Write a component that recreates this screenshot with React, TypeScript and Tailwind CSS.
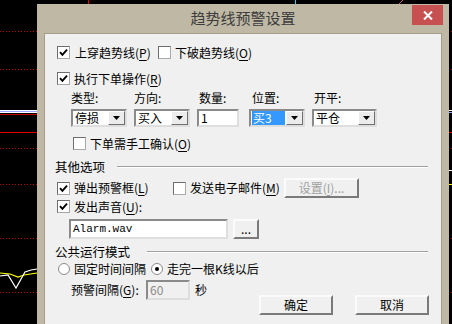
import React from "react";

const CJK = "font-['Noto_Sans_CJK_SC','Liberation_Sans',sans-serif]";

function Check({ checked }: { checked?: boolean }) {
  return (
    <span className="w-[13px] h-[13px] shrink-0 border border-t-[#6d6d6d] border-l-[#6d6d6d] border-r-[#a9a9a9] border-b-[#a9a9a9] bg-white flex items-center justify-center">
      {checked && (
        <svg width="9" height="9" viewBox="0 0 9 9">
          <path d="M1 4.2 L3.4 6.8 L8 1.6" stroke="#000" strokeWidth="1.9" fill="none" />
        </svg>
      )}
    </span>
  );
}

function Radio({ checked }: { checked?: boolean }) {
  return (
    <span className="w-[12px] h-[12px] shrink-0 rounded-full border border-[#8a8a8a] bg-white flex items-center justify-center">
      {checked && <span className="w-[4px] h-[4px] rounded-full bg-black" />}
    </span>
  );
}

function U({ c }: { c: string }) {
  return (
    <>
      (<span className="underline underline-offset-2">{c}</span>)
    </>
  );
}

function Arrow() {
  return (
    <span className="w-[17px] h-full shrink-0 bg-[#ececec] border border-t-white border-l-white border-r-[#6f6f6f] border-b-[#6f6f6f] flex items-center justify-center">
      <svg width="7" height="4" viewBox="0 0 7 4">
        <path d="M0 0 H7 L3.5 4 Z" fill="#000" />
      </svg>
    </span>
  );
}

function Select({ text, w, active }: { text: string; w: string; active?: boolean }) {
  return (
    <div className={`${w} h-[18px] flex border-2 border-t-[#8a8a8a] border-l-[#8a8a8a] border-r-[#dedede] border-b-[#dedede] bg-white`}>
      <div className="flex-1 h-full flex items-center px-[1px]">
        <span
          className={`h-full flex items-center px-[1px] leading-[14px] ${active ? "bg-[#3399ff] text-white flex-1" : "text-black"}`}
        >
          {text}
        </span>
      </div>
      <Arrow />
    </div>
  );
}

function Btn({ children, w, disabled, def }: { children: React.ReactNode; w: string; disabled?: boolean; def?: boolean }) {
  return (
    <div
      className={`${w} h-[20px] flex items-center justify-center bg-[#f0f0f0] border ${def ? "border-2" : "border-2"} border-t-[#fbfbfb] border-l-[#fbfbfb] border-r-[#7a7a7a] border-b-[#7a7a7a] ${disabled ? "text-[#a0a0a0]" : "text-black"}`}
    >
      {children}
    </div>
  );
}

function GroupHeader({ text, tw }: { text: string; tw: string }) {
  return (
    <div className="h-[14px] flex items-center pl-[10px] pr-[13px]">
      <span className={`${tw} shrink-0 text-[12.5px] leading-[14px] text-black`}>{text}</span>
      <div className="flex-1 flex flex-col">
        <div className="h-px bg-[#a0a0a0]" />
        <div className="h-px bg-white" />
      </div>
    </div>
  );
}

function Chart() {
  const dotted = [31, 69, 148, 184, 238, 292];
  return (
    <svg className="absolute inset-0 pointer-events-none" width="452" height="324" viewBox="0 0 452 324">
      {dotted.map((y) => (
        <g key={y}>
          <line x1="0" x2="37" y1={y + 0.5} y2={y + 0.5} stroke="#c00000" strokeDasharray="1 2" />
          <line x1="448" x2="452" y1={y + 0.5} y2={y + 0.5} stroke="#c00000" strokeDasharray="1 2" />
        </g>
      ))}
      <line x1="0" x2="37" y1="110.5" y2="110.5" stroke="#ffffff" />
      <line x1="0" x2="37" y1="111.5" y2="111.5" stroke="#9aa4ff" />
      <line x1="0" x2="37" y1="112.5" y2="112.5" stroke="#ffffff" />
      <line x1="0" x2="37" y1="114.5" y2="114.5" stroke="#c00000" />
      <line x1="0" x2="37" y1="132.5" y2="132.5" stroke="#e00000" />
      <line x1="448" x2="452" y1="110.5" y2="110.5" stroke="#ffffff" />
      <line x1="448" x2="452" y1="112.5" y2="112.5" stroke="#9aa4ff" />
      <line x1="448" x2="452" y1="132.5" y2="132.5" stroke="#e00000" />
      <line x1="448" x2="452" y1="170.5" y2="170.5" stroke="#ffffff" />
      <line x1="448" x2="452" y1="184.5" y2="184.5" stroke="#ffff00" />
      <polyline points="0,273 10,274 18,277 24,275 37,273" stroke="#ffff00" fill="none" strokeWidth="1.2" />
      <polyline points="0,276 8,275 16,288 25,272 31,270 37,269" stroke="#ffffff" fill="none" strokeWidth="1.2" />
      <line x1="88.5" x2="88.5" y1="0" y2="4" stroke="#e00000" />
      <line x1="295.5" x2="295.5" y1="0" y2="4" stroke="#00e0ff" />
      <line x1="399" x2="403" y1="4" y2="0" stroke="#d06080" />
    </svg>
  );
}

export default function App() {
  return (
    <div className={`relative w-[452px] h-[324px] bg-black overflow-hidden ${CJK} text-[12px] leading-[14px]`}>
      <Chart />
      <div className="absolute left-[37px] top-[4px] w-[412px] h-[330px] bg-[#bfb8a4] flex flex-col">
        <div className="relative h-[29px] shrink-0 flex items-center justify-center">
          <span className="text-[15px] leading-[18px] text-[#3c3c3c] -mt-[1px]">趋势线预警设置</span>
          <div className="absolute right-[6px] top-[1px] w-[31px] h-[20px] bg-[#c75050] flex items-center justify-center">
            <svg width="10" height="9" viewBox="0 0 10 9">
              <path d="M1 0.5 L9 8.5 M9 0.5 L1 8.5" stroke="#fff" strokeWidth="2" />
            </svg>
          </div>
        </div>
        <div className="mx-[7px] flex-1 border border-[#a39c88] bg-[#f0f0f0] flex flex-col text-black">
          {/* Row 1 */}
          <div className="mt-[12px] h-[13px] flex items-center pl-[12px]">
            <div className="w-[101px] flex items-center gap-[5px]">
              <Check checked />
              <span>上穿趋势线<U c="P" /></span>
            </div>
            <div className="flex items-center gap-[4px]">
              <Check />
              <span>下破趋势线<U c="O" /></span>
            </div>
          </div>
          {/* Row 2 */}
          <div className="mt-[13px] h-[13px] flex items-center pl-[12px] gap-[4px]">
            <Check checked />
            <span>执行下单操作<U c="R" /></span>
          </div>
          {/* Selects */}
          <div className="mt-[6px] flex pl-[26px]">
            <div className="flex flex-col">
              <span className="h-[14px]">类型:</span>
              <div className="mt-[4px]"><Select text="停损" w="w-[56px]" /></div>
            </div>
            <div className="flex flex-col ml-[7px]">
              <span className="h-[14px]">方向:</span>
              <div className="mt-[4px]"><Select text="买入" w="w-[56px]" /></div>
            </div>
            <div className="flex flex-col ml-[7px]">
              <span className="h-[14px] pl-[2px]">数量:</span>
              <div className="mt-[4px] w-[42px] h-[18px] border-2 border-t-[#8a8a8a] border-l-[#8a8a8a] border-r-[#dedede] border-b-[#dedede] bg-white flex items-center pl-[2px]">
                1
              </div>
            </div>
            <div className="flex flex-col ml-[10px]">
              <span className="h-[14px] pl-[3px]">位置:</span>
              <div className="mt-[4px]"><Select text="买3" w="w-[56px]" active /></div>
            </div>
            <div className="flex flex-col ml-[7px]">
              <span className="h-[14px] pl-[2px]">开平:</span>
              <div className="mt-[4px]"><Select text="平仓" w="w-[65px]" /></div>
            </div>
          </div>
          {/* Row 5 */}
          <div className="mt-[10px] h-[13px] flex items-center pl-[28px] gap-[4px]">
            <Check />
            <span>下单需手工确认<U c="O" /></span>
          </div>
          {/* Group 1 */}
          <div className="mt-[10px]">
            <GroupHeader text="其他选项" tw="w-[62px]" />
          </div>
          <div className="mt-[4px] h-[20px] flex items-center pl-[12px]">
            <div className="w-[116px] flex items-center gap-[4px]">
              <Check checked />
              <span>弹出预警框<U c="L" /></span>
            </div>
            <div className="w-[111px] flex items-center gap-[4px]">
              <Check />
              <span>发送电子邮件<U c="M" /></span>
            </div>
            <Btn w="w-[75px]" disabled>
              设置<U c="I" />...
            </Btn>
          </div>
          <div className="mt-[2px] h-[13px] flex items-center pl-[12px] gap-[4px]">
            <Check checked />
            <span>发出声音<U c="U" />:</span>
          </div>
          <div className="mt-[6px] h-[20px] flex pl-[24px]">
            <div className="w-[159px] h-[20px] border-2 border-t-[#8a8a8a] border-l-[#8a8a8a] border-r-[#dedede] border-b-[#dedede] bg-white flex items-center pl-[2px] font-['Liberation_Mono',monospace] text-[11px]">
              Alarm.wav
            </div>
            <div className="ml-[5px]">
              <Btn w="w-[26px]">...</Btn>
            </div>
          </div>
          {/* Group 2 */}
          <div className="mt-[6px]">
            <GroupHeader text="公共运行模式" tw="w-[92px]" />
          </div>
          <div className="mt-[3px] h-[13px] flex items-center pl-[13px]">
            <div className="w-[93px] flex items-center gap-[4px]">
              <Radio />
              <span>固定时间间隔</span>
            </div>
            <div className="flex items-center gap-[4px]">
              <Radio checked />
              <span>走完一根K线以后</span>
            </div>
          </div>
          <div className="mt-[5px] flex items-start pl-[26px]">
            <div className="h-[20px] flex items-center">
              <span className="w-[75px]">预警间隔<U c="G" />:</span>
              <div className="w-[44px] h-[20px] border-2 border-t-[#8a8a8a] border-l-[#8a8a8a] border-r-[#dedede] border-b-[#dedede] bg-[#f0f0f0] text-[#8a8a8a] flex items-center pl-[2px]">
                60
              </div>
              <span className="ml-[5px]">秒</span>
            </div>
            <div className="ml-[52px] mt-[15px]">
              <Btn w="w-[74px]" def>确定</Btn>
            </div>
            <div className="ml-[22px] mt-[15px]">
              <Btn w="w-[74px]">取消</Btn>
            </div>
          </div>
        </div>
      </div>
    </div>
  );
}
